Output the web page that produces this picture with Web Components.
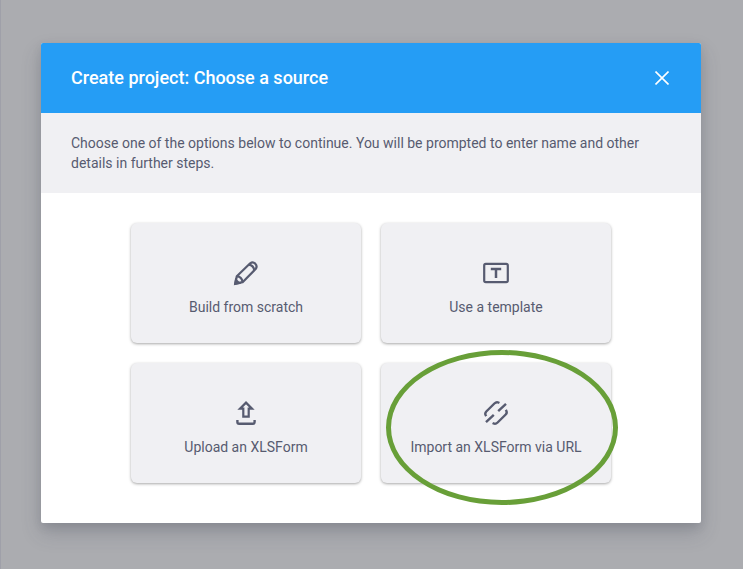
<!DOCTYPE html>
<html lang="en">
<head>
<meta charset="utf-8">
<title>Create project</title>
<style>
html, body { height: 100%; }
body { margin: 0; font-family: Roboto, "Liberation Sans", sans-serif; font-size: 14px; line-height: 20px; color: #575b70; background: #abacb0; }
</style>
</head>
<body>
<modal-backdrop>
  <project-modal>
    <modal-header slot="header">Create project: Choose a source</modal-header>
    <modal-intro slot="intro">Choose one of the options below to continue. You will be prompted to enter name and other details in further steps.</modal-intro>
    <source-grid>
      <source-card icon="pencil">Build from scratch</source-card>
      <source-card icon="template">Use a template</source-card>
      <source-card icon="upload">Upload an XLSForm</source-card>
      <source-card icon="link" highlighted>Import an XLSForm via URL</source-card>
    </source-grid>
  </project-modal>
</modal-backdrop>
<script>
const base = '<style>*, :host { box-sizing: border-box; } button { font: inherit; color: inherit; border: 0; margin: 0; cursor: pointer; }</style>';
function define(name, markup) {
  customElements.define(name, class extends HTMLElement {
    constructor() {
      super();
      this.attachShadow({ mode: 'open' }).innerHTML = base + markup;
    }
  });
}

define('modal-backdrop', `<style>
:host { display: flex; justify-content: center; align-items: flex-start; min-height: 100%; padding: 43px 42px 43px 40px; border-left: 1px solid #9fa0a9; background: #abacb0; }
</style><slot></slot>`);

define('project-modal', `<style>
:host { display: block; flex: 1; max-width: 660px; border-radius: 2px; overflow: hidden; background: #fff; box-shadow: 0 10px 20px rgba(60, 65, 80, .22), 0 4px 10px rgba(60, 65, 80, .14); }
section { padding: 30px 30px 40px; }
</style><div role="dialog" aria-label="Create project"><slot name="header"></slot><slot name="intro"></slot><section><slot></slot></section></div>`);

define('modal-header', `<style>
:host { display: flex; align-items: center; justify-content: space-between; height: 70px; padding: 0 24px 0 30px; background: #259df5; color: #fff; }
h1 { margin: 0; font-size: 18px; line-height: 24px; font-weight: 500; }
button { display: flex; padding: 8px; background: none; }
svg { display: block; width: 14px; height: 14px; }
</style><h1><slot></slot></h1>
<button type="button" aria-label="Close"><svg viewBox="0 0 14 14" fill="none" stroke="currentColor" stroke-width="1.6"><path d="M.5.5 13.5 13.5M13.5.5.5 13.5"/></svg></button>`);

define('modal-intro', `<style>
:host { display: block; padding: 20px 30px; background: #f0f0f3; }
p { margin: 0; }
</style><p><slot></slot></p>`);

define('source-grid', `<style>
:host { display: grid; grid-template-columns: repeat(2, minmax(0, 230px)); gap: 20px; justify-content: center; }
</style><slot></slot>`);

const icons = {
  pencil: '<path stroke-linejoin="round" d="M5.3 26.7 6.8 19.2 20.2 6.3A4 4 0 0 1 25.8 11.8L12.6 25.2Z"/><path d="M6.8 19.2Q12 20 12.6 25.2M18.8 7.7Q23.6 8.5 24.2 13.2"/><path d="M5.2 26.8 5.9 23 9 26Z" fill="currentColor"/>',
  template: '<rect x="4.2" y="6.8" width="23.6" height="18.4" rx="1.6"/><path d="M10.8 12H21.2M16 12V21" stroke-width="2.5"/>',
  upload: '<path d="M16 5.6 22 11.6H18.7V19.6H13.3V11.6H10Z"/><path d="M7.4 23V25Q7.4 26.7 9.1 26.7H22.9Q24.6 26.7 24.6 25V23" stroke-width="2.4"/>',
  link: '<g stroke-width="2.4"><path d="M6.2 19.2 5.7 18.3Q4.6 16.2 6.3 14.5L14.4 6.5Q16.4 4.5 18.4 5.5L19.4 6M25.8 12.8 26.3 13.7Q27.4 15.8 25.7 17.5L17.6 25.5Q15.6 27.5 13.6 26.5L12.6 26M18.2 14.2 26 6.8M6 25.2 13.8 17.8"/></g>'
};

customElements.define('source-card', class extends HTMLElement {
  constructor() {
    super();
    this.attachShadow({ mode: 'open' }).innerHTML = base + `<style>
:host { display: block; position: relative; }
button { display: flex; flex-direction: column; align-items: center; justify-content: center; gap: 8px; width: 100%; min-height: 120px; padding: 28px 20px 20px; border-radius: 6px; background: #f0f0f3; box-shadow: 0 1px 3px rgba(0, 0, 0, .35); }
.icon { display: block; width: 32px; height: 32px; }
.ring { display: none; position: absolute; inset: -13px -7px -22px 5px; border: 5px solid #689f38; border-radius: 50%; pointer-events: none; }
:host([highlighted]) .ring { display: block; }
</style><button type="button"><svg class="icon" viewBox="0 0 32 32" fill="none" stroke="currentColor" stroke-width="2.2" aria-hidden="true">${icons[this.getAttribute('icon')]}</svg><span><slot></slot></span></button><div class="ring"></div>`;
  }
});
</script>
</body>
</html>
